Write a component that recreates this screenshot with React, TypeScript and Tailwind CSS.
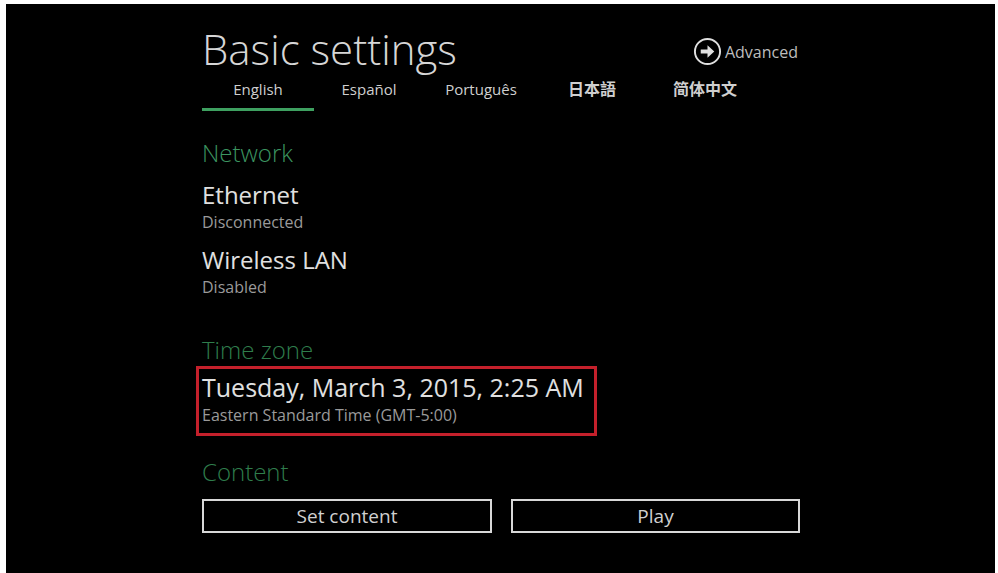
import { ReactNode } from "react";

const tabs = [
  { label: "English", cls: "w-[112px]" },
  { label: "Español", cls: "w-[100px] ml-[5px]" },
  { label: "Português", cls: "w-[100px] ml-[12px]" },
  { label: "日本語", cls: "w-[80px] ml-[21px]" },
  { label: "简体中文", cls: "w-[90px] ml-[28px]" },
];

function SectionTitle({ children, dim }: { children: ReactNode; dim?: boolean }) {
  return (
    <h2
      className={`text-[24px] font-light leading-none ${
        dim ? "text-[#2f7d4c]" : "text-[#3c9560]"
      }`}
    >
      {children}
    </h2>
  );
}

function Item({ title, sub }: { title: string; sub: string }) {
  return (
    <div>
      <div className="text-[24px] leading-none text-[#e0e0e0]">{title}</div>
      <div className="mt-[7px] text-[16px] leading-none text-[#9a9a9a]">{sub}</div>
    </div>
  );
}

export default function App() {
  return (
    <div
      className="w-[998px] h-[573px] bg-white pt-[4px] pl-[6px] pr-[3px] overflow-hidden"
      style={{ fontFamily: '"Open Sans", "Noto Sans CJK SC", sans-serif' }}
    >
      <div className="h-full bg-black pl-[196px] pt-[24px]">
        <div className="w-[598px]">
          {/* Header */}
          <div className="flex h-[42px] items-start justify-between">
            <h1 className="text-[42px] font-light leading-none text-[#d6d6d6]">
              Basic settings
            </h1>
            <button className="mt-[9px] mr-[2px] flex items-center gap-[3px] text-[16px] leading-none text-[#bdbdbd]">
              <svg width="29" height="29" viewBox="0 0 30 30" fill="none">
                <circle cx="15" cy="15" r="13" stroke="#e0e0e0" strokeWidth="2" />
                <path d="M8 13h7V8.5l7 6.5-7 6.5V17H8z" fill="#e0e0e0" />
              </svg>
              Advanced
            </button>
          </div>

          {/* Languages */}
          <div className="mt-[12px] flex text-[15px] leading-none text-[#cfcfcf]">
            {tabs.map((t, i) => (
              <div key={t.label} className={`flex flex-col items-center ${t.cls}`}>
                <span className={i >= 3 ? "font-semibold text-[16px] leading-[15px]" : ""}>
                  {t.label}
                </span>
                <div className={`mt-[11px] h-[3px] w-full ${i === 0 ? "bg-[#3ea060]" : ""}`} />
              </div>
            ))}
          </div>

          {/* Network */}
          <div className="mt-[30px]">
            <SectionTitle>Network</SectionTitle>
            <div className="mt-[18px] flex flex-col gap-[18px]">
              <Item title="Ethernet" sub="Disconnected" />
              <Item title="Wireless LAN" sub="Disabled" />
            </div>
          </div>

          {/* Time zone */}
          <div className="mt-[43px] -ml-[6px]">
            <div className="pl-[6px]">
              <SectionTitle dim>Time zone</SectionTitle>
            </div>
            <div className="mt-[4px] w-[401px] border-[3px] border-[#c4202b] pl-[3px] pt-[6px] pb-[10px]">
              <div className="text-[25px] leading-none text-[#e0e0e0]">
                Tuesday, March 3, 2015, 2:25 AM
              </div>
              <div className="mt-[7px] text-[16px] leading-none text-[#9a9a9a]">
                Eastern Standard Time (GMT-5:00)
              </div>
            </div>
          </div>

          {/* Content */}
          <div className="mt-[24px]">
            <SectionTitle dim>Content</SectionTitle>
            <div className="mt-[15px] flex gap-[19px]">
              <button className="h-[34px] w-[290px] border-2 border-[#d8d8d8] text-[19px] leading-none text-[#d0d0d0]">
                Set content
              </button>
              <button className="h-[34px] w-[289px] border-2 border-[#d8d8d8] text-[19px] leading-none text-[#d0d0d0]">
                Play
              </button>
            </div>
          </div>
        </div>
      </div>
    </div>
  );
}
